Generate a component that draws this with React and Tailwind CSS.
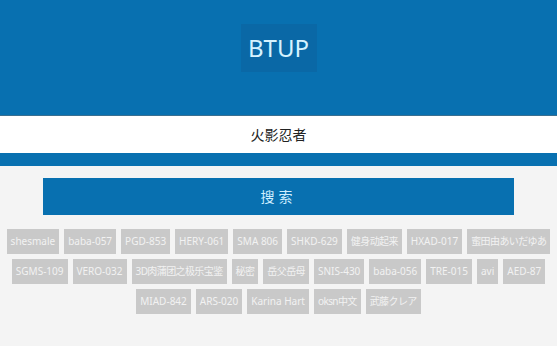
const tags = [
  'shesmale', 'baba-057', 'PGD-853', 'HERY-061', 'SMA 806', 'SHKD-629', '健身动起来', 'HXAD-017', '蜜田由あいだゆあ',
  'SGMS-109', 'VERO-032', '3D肉蒲团之极乐宝鉴', '秘密', '岳父岳母', 'SNIS-430', 'baba-056', 'TRE-015', 'avi', 'AED-87',
  'MIAD-842', 'ARS-020', 'Karina Hart', 'oksn中文', '武藤クレア',
];

// CJK tags run a bit tighter in the original font
const isCjk = (t) => /[\u3040-\u30ff\u4e00-\u9fff]/.test(t);

export default function App() {
  return (
    <div className="min-h-[346px] w-[557px] bg-[#f4f4f4] font-['Noto_Sans','Noto_Sans_CJK_SC',sans-serif]">
      <header className="flex h-[115px] justify-center bg-[#0870b0] pt-[24px]">
        <div className="flex h-[48px] w-[76px] items-center justify-center bg-[#0a68a6] text-[24px] text-[#d6f3ff]">
          BTUP
        </div>
      </header>
      <div className="border-t border-[#3a6f90] bg-[#0870b0] pb-[13px]">
        <div className="flex h-[37px] items-center justify-center bg-white text-[14px] text-[#222]">
          火影忍者
        </div>
      </div>
      <div className="px-[43px] pt-[12px]">
        <button className="flex h-[37px] w-full items-center justify-center bg-[#0870b0] text-[14px] tracking-[4px] text-[#cfeeff]">
          搜索
        </button>
      </div>
      <div className="mt-[14px] flex flex-wrap justify-center gap-[5px] px-[2px]">
        {tags.map((t) => (
          <span
            key={t}
            className={`flex h-[25px] items-center bg-[#c9c9c9] px-[4px] text-[10px] text-[#f2f2f2] ${isCjk(t) ? 'tracking-[-0.6px]' : ''}`}
          >
            {t}
          </span>
        ))}
      </div>
    </div>
  );
}
